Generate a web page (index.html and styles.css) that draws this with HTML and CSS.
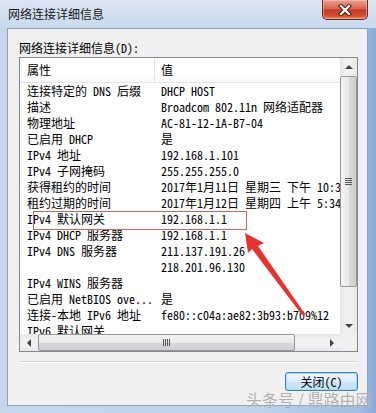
FILE: index.html
```html
<!DOCTYPE html>
<html lang="zh-CN">
<head>
  <meta charset="UTF-8">
  <meta name="viewport" content="width=device-width, initial-scale=1.0">
  <title>网络连接详细信息</title>
  <link rel="stylesheet" href="styles.css">
</head>
<body>

  <div class="window">
    <div class="titlebar">
      <span class="title">网络连接详细信息</span>
      <div class="close-btn">
        <svg width="14" height="12" viewBox="0 0 14 12">
          <path d="M3 2 L11 10 M11 2 L3 10" stroke="#4a1d16" stroke-width="4.2" stroke-linecap="square"/>
          <path d="M3 2 L11 10 M11 2 L3 10" stroke="#fff" stroke-width="2.2" stroke-linecap="square"/>
        </svg>
      </div>
    </div>

    <div class="client">
      <div class="caption">网络连接详细信息(D):</div>

      <div class="listview">
        <div class="viewport">
          <div class="lv-header">
            <div class="col1">属性</div>
            <div class="col2">值</div>
          </div>
          <div class="lv-row"><div class="col1">连接特定的 DNS 后缀</div><div class="col2">DHCP HOST</div></div>
          <div class="lv-row"><div class="col1">描述</div><div class="col2">Broadcom 802.11n 网络适配器</div></div>
          <div class="lv-row"><div class="col1">物理地址</div><div class="col2">AC-81-12-1A-B7-04</div></div>
          <div class="lv-row"><div class="col1">已启用 DHCP</div><div class="col2">是</div></div>
          <div class="lv-row"><div class="col1">IPv4 地址</div><div class="col2">192.168.1.101</div></div>
          <div class="lv-row"><div class="col1">IPv4 子网掩码</div><div class="col2">255.255.255.0</div></div>
          <div class="lv-row"><div class="col1">获得租约的时间</div><div class="col2">2017年1月11日 星期三 下午 10:35:48</div></div>
          <div class="lv-row"><div class="col1">租约过期的时间</div><div class="col2">2017年1月12日 星期四 上午 5:34:21</div></div>
          <div class="lv-row"><div class="col1">IPv4 默认网关</div><div class="col2">192.168.1.1</div></div>
          <div class="lv-row"><div class="col1">IPv4 DHCP 服务器</div><div class="col2">192.168.1.1</div></div>
          <div class="lv-row"><div class="col1">IPv4 DNS 服务器</div><div class="col2">211.137.191.26</div></div>
          <div class="lv-row"><div class="col1"></div><div class="col2">218.201.96.130</div></div>
          <div class="lv-row"><div class="col1">IPv4 WINS 服务器</div><div class="col2"></div></div>
          <div class="lv-row"><div class="col1">已启用 NetBIOS ove...</div><div class="col2">是</div></div>
          <div class="lv-row"><div class="col1">连接-本地 IPv6 地址</div><div class="col2">fe80::c04a:ae82:3b93:b709%12</div></div>
          <div class="lv-row"><div class="col1">IPv6 默认网关</div><div class="col2"></div></div>
        </div>

        <div class="vscroll">
          <div class="sb-btn"><span class="tri tri-up"></span></div>
          <div class="thumb thumb-v"><span class="grip-v"></span></div>
          <div class="sb-fill"></div>
          <div class="sb-btn"><span class="tri tri-down"></span></div>
        </div>

        <div class="hscroll">
          <div class="sb-btn"><span class="tri tri-left"></span></div>
          <div class="thumb thumb-h"><span class="grip-h"></span></div>
          <div class="sb-fill"></div>
          <div class="sb-btn"><span class="tri tri-right"></span></div>
        </div>

        <div class="corner"></div>
      </div>

      <div class="separator"></div>

      <div class="buttons">
        <button class="btn">关闭(C)</button>
      </div>
    </div>

    <!-- annotation drawn over the dialog -->
    <div class="mark-box"></div>
    <svg class="mark-arrow" width="376" height="413" viewBox="0 0 376 413">
      <polygon points="245,233 264,243 258,246 305,314 302,315 252,249 248,253" fill="#e5332e"/>
    </svg>

    <div class="watermark">头条号 / 鼎路由网</div>
  </div>

</body>
</html>
```

FILE: styles.css
```css
* {
  margin: 0;
  padding: 0;
  box-sizing: border-box;
}

body {
  font-family: "Noto Sans Mono CJK SC", "Noto Sans CJK SC", monospace;
  font-size: 12px;
  color: #000;
  background-color: #c4d5ea;
}

.window {
  position: relative;
  width: 376px;
  height: 413px;
  padding: 0 8px 7px 7px;
  display: flex;
  flex-direction: column;
  background: linear-gradient(to right, #c6d7ec 0, #bfd2ea 70%, #9fbce2 96%, #88a9d8 100%);
  overflow: hidden;
}

.titlebar {
  height: 28px;
  display: flex;
  justify-content: space-between;
  align-items: flex-start;
  padding-left: 1px;
  background: linear-gradient(#dae5f3, #c9daee);
  margin: 0 -8px 0 -7px;
  padding: 0 8px 0 8px;
}

.title {
  line-height: 28px;
  color: #1a1a1a;
}

.close-btn {
  width: 46px;
  height: 20px;
  display: flex;
  align-items: center;
  justify-content: center;
  border: 1px solid #6b2a22;
  border-top: none;
  border-radius: 0 0 5px 5px;
  background: linear-gradient(#e9a193 0, #d8654f 45%, #c43a22 52%, #cf4a2e 80%, #e4865f 100%);
  box-shadow: inset 0 0 0 1px rgba(255, 210, 200, 0.45);
}

.client {
  flex: 1;
  display: flex;
  flex-direction: column;
  background-color: #f0f0f0;
  border: 1px solid #8ea3bd;
  padding: 11px 10px 0 11px;
}

.caption {
  line-height: 16px;
  margin-bottom: 1px;
}

/* list view */

.listview {
  display: grid;
  grid-template-columns: 320px 17px;
  grid-template-rows: 276px 17px;
  width: 339px;
  height: 295px;
  border: 1px solid #828790;
  background-color: #fff;
}

.viewport {
  overflow: hidden;
  white-space: nowrap;
}

.lv-header,
.lv-row {
  display: grid;
  grid-template-columns: 135px auto;
}

.lv-header {
  height: 25px;
  line-height: 24px;
  border-bottom: 1px solid #e5e5e5;
  background: linear-gradient(#fff 0, #fff 55%, #f9fafb 100%);
}

.lv-header .col1 {
  border-right: 1px solid #e5e5e5;
}

.lv-row {
  height: 16px;
  line-height: 16px;
}

.col1 {
  padding-left: 7px;
  overflow: hidden;
}

.col2 {
  padding-left: 6px;
}

/* scrollbars */

.vscroll,
.hscroll {
  display: flex;
  background: linear-gradient(to right, #e6e6e6, #f1f1f1 30%, #f1f1f1 70%, #e6e6e6);
}

.vscroll {
  flex-direction: column;
}

.hscroll {
  background: linear-gradient(#e6e6e6, #f1f1f1 30%, #f1f1f1 70%, #e6e6e6);
}

.sb-btn {
  width: 17px;
  height: 17px;
  flex-shrink: 0;
  display: flex;
  align-items: center;
  justify-content: center;
}

.sb-fill {
  flex: 1;
}

.thumb {
  display: flex;
  align-items: center;
  justify-content: center;
  border: 1px solid #979797;
  border-radius: 2px;
}

.thumb-v {
  height: 211px;
  margin: 1px 0 0 0;
  background: linear-gradient(to right, #f4f4f4, #eaeaea 50%, #d8d8d8 51%, #d0d0d0);
}

.thumb-h {
  width: 257px;
  margin-left: 1px;
  background: linear-gradient(#f4f4f4, #eaeaea 50%, #d8d8d8 51%, #d0d0d0);
}

.grip-v {
  width: 7px;
  height: 7px;
  background: repeating-linear-gradient(#555 0, #555 1px, transparent 1px, transparent 2px);
}

.grip-h {
  width: 7px;
  height: 7px;
  background: repeating-linear-gradient(to right, #555 0, #555 1px, transparent 1px, transparent 2px);
}

.tri {
  width: 0;
  height: 0;
  border: 4px solid transparent;
}

.tri-up {
  border-bottom: 4px solid #444;
  border-top-width: 0;
}

.tri-down {
  border-top: 4px solid #444;
  border-bottom-width: 0;
}

.tri-left {
  border-right: 4px solid #444;
  border-left-width: 0;
}

.tri-right {
  border-left: 4px solid #444;
  border-right-width: 0;
}

.corner {
  background-color: #f0f0f0;
}

.separator {
  width: 339px;
  height: 2px;
  margin-top: 9px;
  border-top: 1px solid #d5d5d5;
  border-bottom: 1px solid #fff;
}

.buttons {
  display: flex;
  justify-content: flex-end;
  width: 339px;
  margin-top: 9px;
}

.btn {
  width: 73px;
  height: 19px;
  font-family: inherit;
  font-size: 12px;
  line-height: 16px;
  color: #000;
  border: 1px solid #3c7fb1;
  border-radius: 3px;
  background: linear-gradient(#eef7fd, #deeefa 50%, #cde6f7 51%, #c3e0f4);
  box-shadow: inset 0 0 0 1px #a9dbf6;
}

/* annotation */

.mark-box {
  position: absolute;
  left: 33px;
  top: 211px;
  width: 214px;
  height: 19px;
  border: 1px solid #d5625d;
}

.mark-arrow {
  position: absolute;
  left: 0;
  top: 0;
}

.watermark {
  position: absolute;
  left: 246px;
  top: 389px;
  font-family: "Noto Sans CJK SC", sans-serif;
  font-size: 16px;
  line-height: 20px;
  color: rgba(110, 110, 110, 0.55);
  text-shadow: 0 0 1px rgba(255, 255, 255, 0.8);
  white-space: nowrap;
}
```
